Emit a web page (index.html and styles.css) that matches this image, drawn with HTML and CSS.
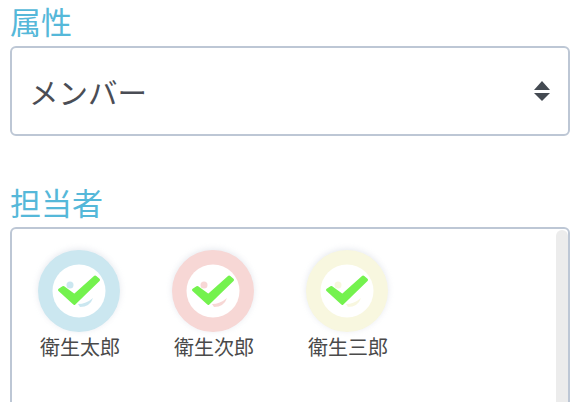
FILE: index.html
```html
<!DOCTYPE html>
<html lang="ja">
<head>
<meta charset="utf-8">
<title>属性</title>
<link rel="stylesheet" href="styles.css">
</head>
<body>
<main class="form">
  <section class="field field-attr">
    <div class="label">属性</div>
    <div class="select">
      <span class="select-value">メンバー</span>
      <svg class="arrows" width="16" height="20" viewBox="0 0 16 20"><path d="M8 0 L16 9 H0 Z M0 12 H16 L8 20 Z"/></svg>
    </div>
  </section>
  <section class="field">
    <div class="label">担当者</div>
    <div class="listbox">
      <div class="members">
        <div class="member">
          <svg class="avatar" width="90" height="90" viewBox="0 0 90 90">
            <circle cx="45" cy="45" r="41" fill="#cbe7f0"/><circle cx="45" cy="45" r="26.500" fill="#fff"/>
            <circle cx="36" cy="39" r="3.500" fill="#cbe7f0"/><path d="M44 58 Q52 58 59 52 Q56 61 46 61 Z" fill="#cbe7f0"/>
            <path d="M25.500 44 L29.300 41.500 L40.300 49.500 L61 31 L64.500 34 L40.300 57.500 Z" class="check"/>
          </svg>
          <span class="name">衛生太郎</span>
        </div>
        <div class="member">
          <svg class="avatar" width="90" height="90" viewBox="0 0 90 90">
            <circle cx="45" cy="45" r="41" fill="#f7d7d5"/><circle cx="45" cy="45" r="26.500" fill="#fff"/>
            <circle cx="36" cy="39" r="3.500" fill="#f7d7d5"/><path d="M44 58 Q52 58 59 52 Q56 61 46 61 Z" fill="#f7d7d5"/>
            <path d="M25.500 44 L29.300 41.500 L40.300 49.500 L61 31 L64.500 34 L40.300 57.500 Z" class="check"/>
          </svg>
          <span class="name">衛生次郎</span>
        </div>
        <div class="member">
          <svg class="avatar" width="90" height="90" viewBox="0 0 90 90">
            <circle cx="45" cy="45" r="41" fill="#f8f7df"/><circle cx="45" cy="45" r="26.500" fill="#fff"/>
            <circle cx="36" cy="39" r="3.500" fill="#f8f7df"/><path d="M44 58 Q52 58 59 52 Q56 61 46 61 Z" fill="#f8f7df"/>
            <path d="M25.500 44 L29.300 41.500 L40.300 49.500 L61 31 L64.500 34 L40.300 57.500 Z" class="check"/>
          </svg>
          <span class="name">衛生三郎</span>
        </div>
      </div>
      <div class="scrollbar"></div>
    </div>
  </section>
</main>
</body>
</html>
```
FILE: styles.css
```css
html, body {
  margin: 0;
  height: 100%;
  overflow: hidden;
  background: #fff;
}
body {
  font-family: "Noto Sans CJK JP", "Noto Sans", sans-serif;
}
.form {
  padding: 0 12px 0 10px;
  display: flex;
  flex-direction: column;
  gap: 45px;
}
.label {
  color: #55b8d9;
  font-size: 31px;
  line-height: 42px;
  height: 46px;
}
.select {
  box-sizing: border-box;
  height: 90px;
  border: 2px solid #bdc7d5;
  border-radius: 6px;
  display: flex;
  align-items: center;
  justify-content: space-between;
  padding: 0 18px 0 19px;
}
.select-value {
  font-size: 29.500px;
  color: #4a4d55;
  margin-left: -2px;
}
.arrows {
  fill: #444a52;
}
.listbox {
  box-sizing: border-box;
  height: 260px;
  border: 2px solid #bdc7d5;
  border-radius: 6px;
  display: flex;
  justify-content: space-between;
  padding-top: 1px;
}
.members {
  display: flex;
  align-items: flex-start;
  padding-top: 16px;
}
.member {
  width: 134px;
  display: flex;
  flex-direction: column;
  align-items: center;
}
.avatar {
  display: block;
  filter: drop-shadow(0 -1px 3px rgba(180, 190, 205, 0.35));
}
.check {
  fill: #74f24e;
  stroke: #74f24e;
  stroke-width: 3;
  stroke-linejoin: round;
}
.name {
  font-size: 20px;
  line-height: 28px;
  color: #4a4a4a;
  margin-top: -3px;
  padding-left: 2px;
}
.scrollbar {
  width: 12px;
  background: #ececec;
  border-radius: 6px 6px 0 0;
}
```
